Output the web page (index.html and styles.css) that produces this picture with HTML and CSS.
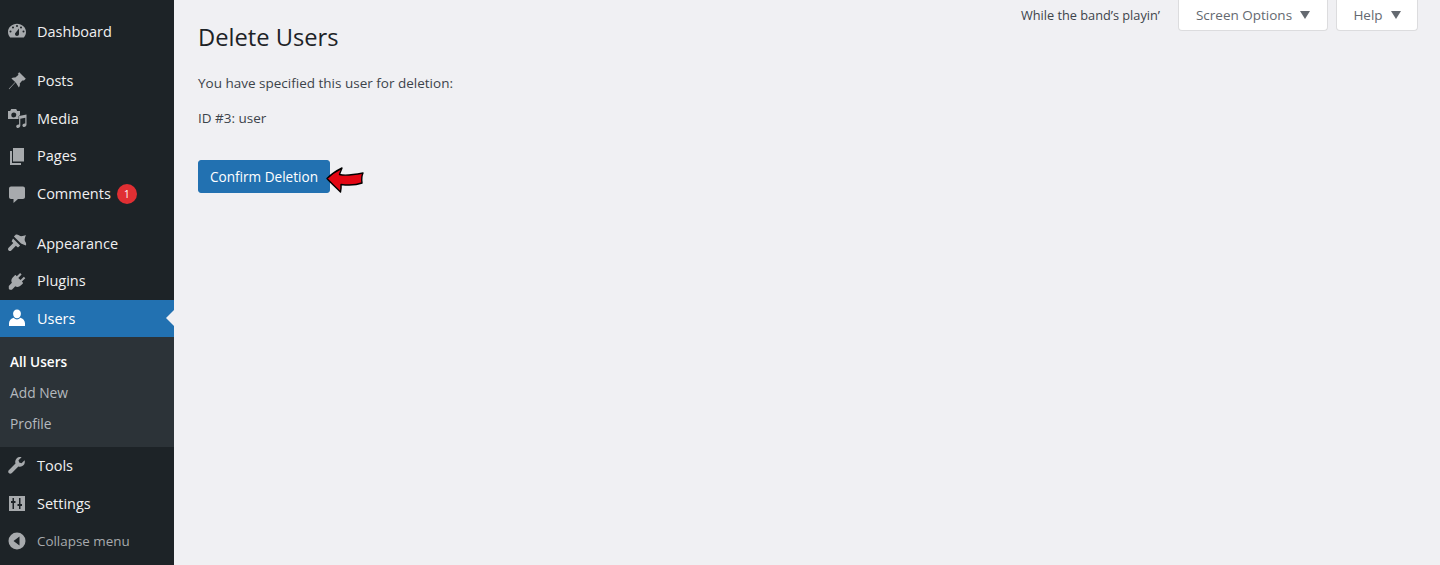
FILE: index.html
```html
<!DOCTYPE html>
<html lang="en">

<head>
    <meta charset="UTF-8">
    <title>Delete Users</title>
    <link rel="stylesheet" href="styles.css">
</head>

<body>
    <aside class="sidebar">
        <ul class="menu">
            <li class="item">
                <svg class="icon" viewBox="0 0 20 20"><path fill-rule="evenodd" d="M3.2 16.5C1.800 15 1 13.100 1 11c0-4.600 4-8.200 9-8.200s9 3.600 9 8.200c0 2.100-.8 4-2.200 5.500zM10 4a1 1 0 100 2 1 1 0 000-2zM6 5.500a1 1 0 100 2 1 1 0 000-2zm8 0a1 1 0 100 2 1 1 0 000-2zM3.500 9.500a1 1 0 100 2 1 1 0 000-2zm13 0a1 1 0 100 2 1 1 0 000-2zM12 7.500l-3.400 4.200c-.4.400-.6.800-.6 1.300 0 1.100.9 2 2 2s2-.9 2-2z"/></svg>
                <span>Dashboard</span>
            </li>
            <li class="item group-start">
                <svg class="icon" viewBox="0 0 20 20"><path d="M10.440 3.020l1.820-1.820 6.550 6.550-1.820 1.820c-.68-.25-1.370-.17-1.940.25l-2.300 2.700c.38 1.380.12 2.900-.88 3.900L8.600 11.300l-6.400 6.900-.4-.4 6.400-6.900L4.400 7.500c1-1 2.500-1.260 3.900-.88l2.700-2.300c.42-.57.5-1.260.25-1.940z"/></svg>
                <span>Posts</span>
            </li>
            <li class="item">
                <svg class="icon" viewBox="0 0 20 20"><path fill-rule="evenodd" d="M1 3h2.200l1-2h5l1 2H13v8H1zm5.800 1.500a2.500 2.500 0 100 5 2.500 2.500 0 000-5z"/><path d="M19.500 6.500v10.300c0 1.200-1.100 2.200-2.400 2.200-1 0-1.700-.6-1.700-1.500 0-1.100 1.100-2 2.300-2 .2 0 .4 0 .6.100V9.800l-5 1v7c0 1.100-1.100 2.200-2.400 2.200-1 0-1.700-.6-1.700-1.500 0-1.100 1.100-2 2.300-2 .2 0 .4 0 .6.100V8z" stroke="#1d2327" stroke-width="1" paint-order="stroke"/></svg>
                <span>Media</span>
            </li>
            <li class="item">
                <svg class="icon" viewBox="0 0 20 20"><path d="M6 2h11v13.500H6z"/><path d="M3 5h2v12h9v2H3z"/></svg>
                <span>Pages</span>
            </li>
            <li class="item">
                <svg class="icon" viewBox="0 0 20 20"><path d="M4 2.500h12c1.100 0 2 .9 2 2V13c0 1.100-.9 2-2 2h-5l-4.500 4v-4H4c-1.100 0-2-.9-2-2V4.500c0-1.100.9-2 2-2z"/></svg>
                <span>Comments</span>
                <b class="badge">1</b>
            </li>
            <li class="item group-start">
                <svg class="icon" viewBox="0 0 20 20"><path d="M14.500 11L7.400 4l1.500-1.500c.6-.6 2.300-.5 3.500.3 1.300.8 2.200 1 3.600.7 1-.2 3.500-1 3.500-1s-1 2.400-1.200 3.500c-.3 1.400-.1 2.300.7 3.500.8 1.200.9 2.900.3 3.500z" transform="translate(-.5 -.5)"/><path d="M6 5.500l7.100 7-1.500 1.500c-.4.400-1 .4-1.400 0l-1.300-1.300-4.600 4.800c-.8.800-2 .8-2.700 0-.8-.8-.8-1.900 0-2.700l4.700-4.700-1.300-1.300c-.4-.4-.4-1 0-1.400z"/></svg>
                <span>Appearance</span>
            </li>
            <li class="item">
                <svg class="icon" viewBox="0 0 20 20"><path d="M13.100 2.100l1.500 1.400-3.300 3.400 2.200 2.100 3.400-3.300 1.400 1.500-3.400 3.300.9 1.100c.3.300.2.800-.1 1.100l-2 1.900c-1.400 1.400-3.800 1.700-5.400.7l-3.400 3.400H2.700l-.9-1v-2.600l3.100-3.300c-1-1.700-.6-4 .8-5.400l2-2c.3-.3.800-.4 1.100-.1l1 .9z"/></svg>
                <span>Plugins</span>
            </li>
            <li class="item current">
                <svg class="icon" viewBox="0 0 20 20"><path d="M10 1.500c2.300 0 3.900 1.900 3.900 4.200S12.300 10.300 10 10.300 6.100 8 6.100 5.700 7.700 1.500 10 1.500z"/><path d="M6.800 9.800c.8 1 2 1.700 3.200 1.700s2.400-.7 3.200-1.700c2.800.9 4.800 2.900 4.800 5.400v2.800H2v-2.800c0-2.500 2-4.500 4.800-5.400z"/></svg>
                <span>Users</span>
            </li>
            <li class="submenu">
                <a class="sub-item active">All Users</a>
                <a class="sub-item">Add New</a>
                <a class="sub-item">Profile</a>
            </li>
            <li class="item">
                <svg class="icon" viewBox="0 0 20 20"><path d="M17.600 4.300l-3.100 3-2.300-.7-.7-2.300 3.100-3c-1.700-.5-3.700-.1-5 1.200-1.400 1.400-1.700 3.400-1.100 5.100L2 14.100c-1.100 1.100-.9 2.300-.2 3 .8.800 2 1 3.100-.1l6.500-6.600c1.700.6 3.700.3 5-1.100 1.400-1.300 1.700-3.300 1.200-5z"/></svg>
                <span>Tools</span>
            </li>
            <li class="item">
                <svg class="icon" viewBox="0 0 20 20"><path fill-rule="evenodd" d="M2 3h16v15H2zM5.500 5v3H4v2h1.500v6h1.500v-6h1.500V8H7V5zm6.500 0v6H10.500v2H12v3h1.500v-3H15v-2h-1.500V5z"/></svg>
                <span>Settings</span>
            </li>
            <li class="item collapse">
                <svg class="icon" viewBox="0 0 20 20"><path fill-rule="evenodd" d="M10 1.500a8.500 8.500 0 110 17 8.500 8.500 0 010-17zM12.500 5.500L6.500 10l6 4.500z"/></svg>
                <span>Collapse menu</span>
            </li>
        </ul>
    </aside>

    <main class="content">
        <div class="page">
            <h1>Delete Users</h1>
            <p class="first">You have specified this user for deletion:</p>
            <p>ID #3: user</p>
            <div class="actions">
                <button class="btn-primary">Confirm Deletion</button>
                <svg class="arrow" viewBox="0 0 38 28"><path d="M1 12.500C5 8.500 11 4.500 16 2c-.8 2-1.800 4-2.500 6.500 6 1.500 13 .5 23.500-1.500-1.500 3-1.500 6.500-1 10-6.500 2.500-13 2.500-21 1.500.3 2.500 0 5-.5 7.500C10 21.500 5 17 1 12.500z" fill="#e30613" stroke="#000" stroke-width="1.400" stroke-linejoin="round"/></svg>
            </div>
        </div>
        <div class="meta">
            <span class="dolly">While the band’s playin’</span>
            <button class="tab tab-screen">Screen Options <i class="caret"></i></button>
            <button class="tab tab-help">Help <i class="caret"></i></button>
        </div>
    </main>
</body>

</html>
```

FILE: styles.css
```css
html,
body {
    margin: 0;
    height: 100%;
}

body {
    display: flex;
    min-height: 565px;
    background-color: #f0f0f3;
    color: #3c434a;
    font-family: 'Open Sans', 'Noto Sans', sans-serif;
    font-size: 14px;
    overflow: hidden;
}

.sidebar {
    width: 174px;
    flex-shrink: 0;
    background-color: #1d2327;
}

.menu {
    list-style: none;
    margin: 0;
    padding: 12.4px 0 0;
}

.item {
    display: flex;
    align-items: center;
    height: 37.6px;
    color: #f0f0f1;
    font-size: 14.5px;
    position: relative;
}

.group-start {
    margin-top: 12px;
}

.icon {
    width: 20px;
    height: 20px;
    margin: 0 10px 0 7px;
    fill: #a7aaad;
    flex-shrink: 0;
}

.badge {
    display: flex;
    align-items: center;
    justify-content: center;
    width: 20px;
    height: 20px;
    margin-left: 6px;
    border-radius: 50%;
    background-color: #e02f33;
    color: #fff;
    font-size: 10px;
    font-weight: 400;
}

.current {
    background-color: #2271b1;
    color: #fff;
}

.current .icon {
    fill: #fff;
}

/* little notch pointing at the content */
.current::after {
    content: '';
    position: absolute;
    right: 0;
    top: 50%;
    margin-top: -8px;
    border: 8px solid transparent;
    border-right-color: #f0f0f3;
}

.submenu {
    display: flex;
    flex-direction: column;
    padding: 8.4px 0 8.2px;
    background-color: #2c3338;
}

.sub-item {
    height: 31px;
    line-height: 31px;
    padding-left: 10px;
    color: #b4b9be;
    font-size: 13.8px;
}

.active {
    color: #fff;
    font-weight: 600;
    font-size: 13.6px;
}

.collapse {
    color: #a7aaad;
    font-size: 13.4px;
}

.content {
    flex: 1;
    display: flex;
    justify-content: space-between;
    align-items: flex-start;
}

.page {
    padding-left: 24px;
}

h1 {
    margin: 19px 0 0;
    color: #1d2327;
    font-size: 23.7px;
    font-weight: 400;
    line-height: 36px;
}

p {
    margin: 15px 0 0;
    font-size: 13.5px;
    line-height: 20px;
}

.first {
    margin-top: 18px;
}

.actions {
    display: flex;
    align-items: flex-start;
    margin-top: 32px;
}

.btn-primary {
    height: 33px;
    width: 132px;
    padding: 0;
    border: 1px solid #2271b1;
    border-radius: 3px;
    background-color: #2271b1;
    color: #fff;
    font-family: inherit;
    font-size: 13.6px;
}

.arrow {
    width: 38px;
    height: 28px;
    margin: 6px 0 0 -4px;
}

.meta {
    display: flex;
    align-items: flex-start;
    margin-right: 22px;
}

.dolly {
    margin: 5px 18px 0 0;
    font-size: 12.75px;
    line-height: 20px;
}

.tab {
    display: flex;
    align-items: center;
    justify-content: center;
    height: 31px;
    padding: 0;
    border: 1px solid #dcdcde;
    border-top: 0;
    border-radius: 0 0 4px 4px;
    background-color: #fff;
    color: #646970;
    font-family: inherit;
    font-size: 13.5px;
}

.tab-screen {
    width: 150px;
}

.tab-help {
    width: 82px;
    margin-left: 8px;
}

.caret {
    width: 0;
    height: 0;
    margin-left: 8px;
    border-left: 5px solid transparent;
    border-right: 5px solid transparent;
    border-top: 8px solid #646970;
}
```
